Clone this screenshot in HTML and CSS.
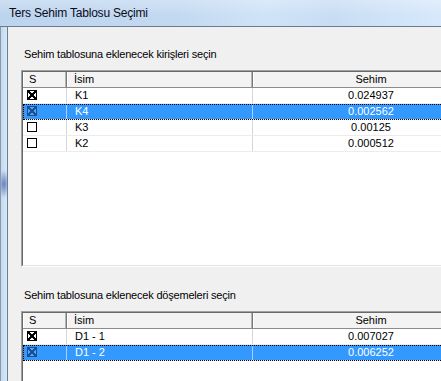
FILE: index.html
```html
<!DOCTYPE html>
<html lang="tr">
<head>
    <meta charset="UTF-8">
    <title>Ters Sehim Tablosu Seçimi</title>
    <link rel="stylesheet" href="styles.css">
</head>
<body>
    <div class="window">
        <div class="titlebar">Ters Sehim Tablosu Seçimi</div>
        <div class="frame">
            <div class="frame-left"></div>
            <div class="client">
                <!-- kirişler -->
                <div class="section-label">Sehim tablosuna eklenecek kirişleri seçin</div>
                <div class="listbox list-beams">
                    <div class="list-inner">
                        <div class="list-head">
                            <div class="hcell c-s">S</div>
                            <div class="hcell c-name">İsim</div>
                            <div class="hcell c-val">Sehim</div>
                        </div>
                        <div class="row">
                            <div class="cell c-s"><span class="check on"></span></div>
                            <div class="cell c-name">K1</div>
                            <div class="cell c-val">0.024937</div>
                        </div>
                        <div class="row selected">
                            <div class="cell c-s"><span class="check on"></span></div>
                            <div class="cell c-name">K4</div>
                            <div class="cell c-val">0.002562</div>
                        </div>
                        <div class="row">
                            <div class="cell c-s"><span class="check"></span></div>
                            <div class="cell c-name">K3</div>
                            <div class="cell c-val">0.00125</div>
                        </div>
                        <div class="row">
                            <div class="cell c-s"><span class="check"></span></div>
                            <div class="cell c-name">K2</div>
                            <div class="cell c-val">0.000512</div>
                        </div>
                    </div>
                </div>

                <!-- döşemeler -->
                <div class="section-label second">Sehim tablosuna eklenecek döşemeleri seçin</div>
                <div class="listbox list-slabs">
                    <div class="list-inner">
                        <div class="list-head">
                            <div class="hcell c-s">S</div>
                            <div class="hcell c-name">İsim</div>
                            <div class="hcell c-val">Sehim</div>
                        </div>
                        <div class="row">
                            <div class="cell c-s"><span class="check on"></span></div>
                            <div class="cell c-name">D1 - 1</div>
                            <div class="cell c-val">0.007027</div>
                        </div>
                        <div class="row selected">
                            <div class="cell c-s"><span class="check on"></span></div>
                            <div class="cell c-name">D1 - 2</div>
                            <div class="cell c-val">0.006252</div>
                        </div>
                    </div>
                </div>
            </div>
        </div>
    </div>
</body>
</html>
```

FILE: styles.css
```css
* {
    margin: 0;
    padding: 0;
    box-sizing: border-box;
}

body {
    width: 441px;
    height: 381px;
    overflow: hidden;
    font-family: 'Liberation Sans', Arial, sans-serif;
    font-size: 11px;
    color: #000;
    background: #f0f0f0;
}

.window {
    display: flex;
    flex-direction: column;
}

.titlebar {
    flex-shrink: 0;
    height: 27px;
    padding: 6px 0 0 9px;
    font-size: 12px;
    line-height: 15px;
    letter-spacing: -0.2px;
    color: #0b0b1a;
    border-bottom: 1px solid #6a7b8f;
    background:
        linear-gradient(to bottom, rgba(255,255,255,0.25), rgba(255,255,255,0) 60%),
        linear-gradient(to right, #bcd4ee 0%, #c3d9f1 40%, #cfe3f8 60%, #c8ddf4 75%, #d7e8fb 100%);
}

.frame {
    display: flex;
}

.frame-left {
    flex-shrink: 0;
    width: 8px;
    border-left: 1px solid #8a9aad;
    border-right: 1px solid #6f7d8e;
    background:
        radial-gradient(ellipse 6px 14px at 3px 157px, rgba(60,90,170,0.7), rgba(60,90,170,0)),
        linear-gradient(to right, #c4d9f0, #d6e7f9);
}

.client {
    flex: 1;
    padding-left: 13px;
    background: #f0f0f0;
    overflow: hidden;
}

.section-label {
    padding: 21px 0 0 3px;
    height: 43px;
    line-height: 13px;
    letter-spacing: -0.2px;
    white-space: nowrap;
}

.section-label.second {
    padding-top: 22px;
    height: 44px;
}

.listbox {
    width: 520px;
    border: 1px solid;
    border-color: #a0a0a0 #fff #fff #a0a0a0;
}

.list-beams {
    height: 197px;
}

.list-slabs {
    height: 120px;
}

.list-inner {
    height: 100%;
    border: 1px solid;
    border-color: #696969 #e3e3e3 #e3e3e3 #696969;
    background: #fff;
}

.list-head {
    display: flex;
    height: 16px;
    border-bottom: 1px solid #8c8c8c;
    background: #f3f3f3;
}

.hcell {
    line-height: 15px;
    border-right: 1px solid #7a7a7a;
    box-shadow: inset 1px 0 #fff, inset -1px 0 #b5b5b5;
    white-space: nowrap;
}

.c-s {
    width: 44px;
}

.c-name {
    width: 186px;
}

.c-val {
    width: 237px;
    text-align: center;
}

.hcell.c-s {
    padding-left: 6px;
}

.hcell.c-name {
    padding-left: 7px;
}

.row {
    display: flex;
    height: 16px;
    border-bottom: 1px solid #ececec;
}

.cell {
    line-height: 15px;
    border-right: 1px solid #d6d6d6;
    white-space: nowrap;
}

.cell.c-s {
    padding: 2px 0 0 4px;
}

.cell.c-name {
    padding-left: 8px;
}

.row.selected {
    background: #3399ff;
    color: #fff;
    outline: 1px dotted #000;
    outline-offset: -1px;
}

.row.selected .cell {
    border-right-color: #a9d1fb;
}

.check {
    display: block;
    width: 10px;
    height: 10px;
    border: 1px solid #000;
    background: #fff;
}

.check.on {
    background:
        linear-gradient(45deg, transparent 43%, #000 43%, #000 57%, transparent 57%),
        linear-gradient(-45deg, transparent 43%, #000 43%, #000 57%, transparent 57%),
        #fff;
}

.row.selected .check {
    border-color: #1d4f8e;
    background:
        linear-gradient(45deg, transparent 43%, #1d4f8e 43%, #1d4f8e 57%, transparent 57%),
        linear-gradient(-45deg, transparent 43%, #1d4f8e 43%, #1d4f8e 57%, transparent 57%),
        #4da6ff;
}
```
